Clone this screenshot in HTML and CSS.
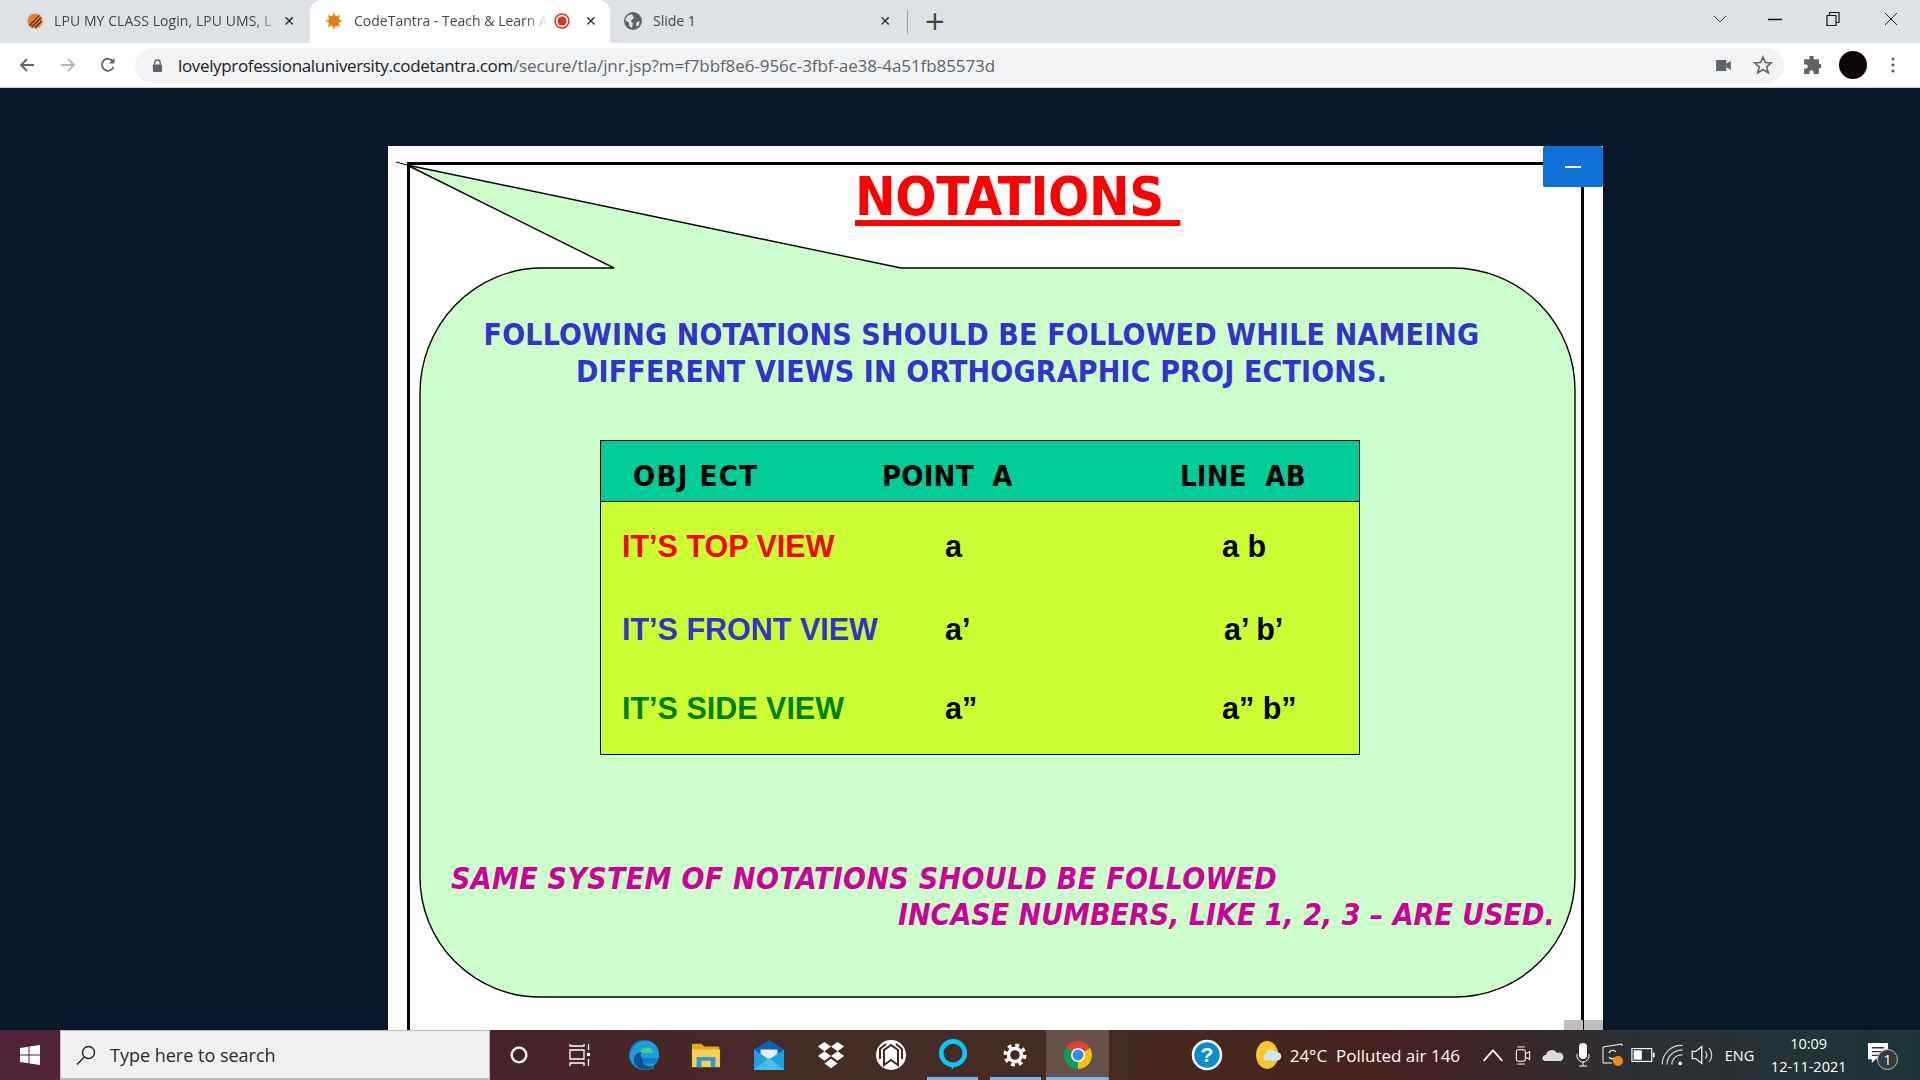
FILE: index.html
```html
<!DOCTYPE html>
<html>
<head>
  <title>CodeTantra - Teach &amp; Learn</title>
  <link rel="stylesheet" href="styles.css">
</head>
<body>
  <!-- Browser tabs -->
  <div class="tabstrip">
    <div class="tab tab-first">
      <svg class="favicon" viewBox="0 0 16 16"><circle cx="8" cy="8" r="8" fill="#d8d4cc"/><circle cx="8" cy="8" r="6.5" fill="#ee7d22"/><path d="M3 12 L12 3 M5 13.5 L13.5 5 M8 14 L14 8" stroke="#4a3328" stroke-width="1.2"/></svg>
      <span class="tab-title">LPU MY CLASS Login, LPU UMS, L</span>
      <span class="tab-close">&#10005;</span>
    </div>
    <div class="tab tab-active">
      <svg class="favicon" viewBox="0 0 20 20"><path d="M10 0 L12 5 L17 3 L15.5 8 L20 10 L15.5 12 L17 17 L12 15 L10 20 L8 15 L3 17 L4.500 12 L0 10 L4.500 8 L3 3 L8 5 Z" fill="#c9a227"/><circle cx="10" cy="10" r="6" fill="#ea7a12"/></svg>
      <span class="tab-title">CodeTantra - Teach &amp; Learn A</span>
      <svg class="rec" viewBox="0 0 16 16"><circle cx="8" cy="8" r="7" fill="none" stroke="#d93025" stroke-width="1.500"/><circle cx="8" cy="8" r="4.500" fill="#d93025"/></svg>
      <span class="tab-close">&#10005;</span>
    </div>
    <div class="tab tab-last">
      <svg class="favicon" viewBox="0 0 16 16"><circle cx="8" cy="8" r="8" fill="#5f6368"/><path d="M3 3 L7 2 L9 5 L6 8 L8 10 L7 14 L5 13 L4 9 L1 7 Z M11 9 L14 8 L13 12 L11 13 Z" fill="#dee1e6"/></svg>
      <span class="tab-title">Slide 1</span>
      <span class="tab-close">&#10005;</span>
    </div>
    <div class="tab-sep"></div>
    <span class="new-tab">+</span>
    <div class="window-controls">
      <svg viewBox="0 0 14 8" class="win-chevron"><path d="M1 1 L7 7 L13 1" fill="none" stroke="#333" stroke-width="1"/></svg>
      <svg viewBox="0 0 14 14" class="win-min"><path d="M0 7.500 H14" stroke="#111" stroke-width="1.500"/></svg>
      <svg viewBox="0 0 14 14" class="win-restore"><path d="M1 3.500 H10 V13.500 H1 Z M3.500 3.500 V0.500 H13 V10.500 H10" fill="none" stroke="#111" stroke-width="1.200"/></svg>
      <svg viewBox="0 0 14 14" class="win-close"><path d="M1 1 L13 13 M13 1 L1 13" stroke="#222" stroke-width="1"/></svg>
    </div>
  </div>

  <!-- Address bar -->
  <div class="toolbar">
    <svg class="nav-icon nav-back" viewBox="0 0 16 16"><path d="M15 8 H2 M8 2 L2 8 L8 14" fill="none" stroke="#5f6368" stroke-width="1.800"/></svg>
    <svg class="nav-icon nav-forward" viewBox="0 0 16 16"><path d="M1 8 H14 M8 2 L14 8 L8 14" fill="none" stroke="#b4b7bb" stroke-width="1.800"/></svg>
    <svg class="nav-icon nav-reload" viewBox="0 0 16 16"><path d="M13.500 10 A6 6 0 1 1 13 4.500" fill="none" stroke="#5f6368" stroke-width="1.800"/><path d="M14.500 1 V6.500 H9 Z" fill="#5f6368"/></svg>
    <div class="omnibox">
      <svg class="lock" viewBox="0 0 12 14"><path d="M3 6 V4 A3 3 0 0 1 9 4 V6" fill="none" stroke="#5f6368" stroke-width="1.400"/><rect x="1" y="6" width="10" height="8" rx="1" fill="#5f6368"/></svg>
      <span class="url"><span class="url-host">lovelyprofessionaluniversity.codetantra.com</span>/secure/tla/jnr.jsp?m=f7bbf8e6-956c-3fbf-ae38-4a51fb85573d</span>
      <svg class="omni-video" viewBox="0 0 16 12"><rect x="0" y="0" width="11" height="12" fill="#5f6368"/><path d="M11 4 L16 1 V11 L11 8 Z" fill="#5f6368"/></svg>
      <svg class="omni-star" viewBox="0 0 20 20"><path d="M10 2 L12.300 7.600 L18.300 8 L13.700 11.900 L15.200 17.800 L10 14.600 L4.800 17.800 L6.300 11.900 L1.700 8 L7.700 7.600 Z" fill="none" stroke="#5f6368" stroke-width="1.600"/></svg>
    </div>
    <svg class="puzzle" viewBox="0 0 18 18"><path d="M7 1 A2 2 0 0 1 11 1 V3 H16 V7.500 H17.500 A2 2 0 0 1 17.500 11.500 H16 V17 H11 V15.500 A2 2 0 0 0 7 15.500 V17 H2 V12 H3.500 A2 2 0 0 0 3.500 8 H2 V3 H7 Z" fill="#5f6368"/></svg>
    <div class="avatar"></div>
    <svg class="kebab" viewBox="0 0 4 16"><circle cx="2" cy="2" r="1.600" fill="#5f6368"/><circle cx="2" cy="8" r="1.600" fill="#5f6368"/><circle cx="2" cy="14" r="1.600" fill="#5f6368"/></svg>
  </div>

  <!-- Presentation area -->
  <div class="stage">
    <div class="slide">
      <div class="frame"></div>
      <svg class="bubble" viewBox="0 0 1215 883">
        <path d="M8 15 L19 18" stroke="#000" stroke-width="1"/>
        <path d="M19 18 L513 121 L1065 121 A122 122 0 0 1 1187 243 L1187 730 A120 120 0 0 1 1067 850 L152 850 A120 120 0 0 1 32 730 L32 246 A122 125 0 0 1 153 121 L226 121 Z" fill="#ccffcc" stroke="#000" stroke-width="1.400"/>
      </svg>

      <h1 class="slide-title">NOTATIONS&nbsp;</h1>
      <p class="intro">FOLLOWING NOTATIONS SHOULD BE FOLLOWED WHILE NAMEING<br>DIFFERENT VIEWS IN ORTHOGRAPHIC PROJ ECTIONS.</p>

      <div class="notation-table">
        <div class="table-head">
          <span class="head-object">OBJ ECT</span>
          <span>POINT&nbsp; A</span>
          <span>LINE&nbsp; AB</span>
        </div>
        <div class="table-body">
          <span class="view-top">IT’S TOP VIEW</span><span>a</span><span>a b</span>
          <span class="view-front">IT’S FRONT VIEW</span><span>a’</span><span class="nudge">a’ b’</span>
          <span class="view-side">IT’S SIDE VIEW</span><span>a”</span><span>a” b”</span>
        </div>
      </div>

      <p class="note note-left">SAME SYSTEM OF NOTATIONS SHOULD BE FOLLOWED</p>
      <p class="note note-right">INCASE NUMBERS, LIKE 1, 2, 3 – ARE USED.</p>

      <div class="corner-mark"></div>
      <button class="minimize"></button>
    </div>
  </div>

  <!-- Windows taskbar -->
  <div class="taskbar">
    <div class="start">
      <svg viewBox="0 0 20 20" class="start-logo"><path d="M0 3 L8.500 1.700 V9.500 H0 Z M9.500 1.500 L20 0 V9.500 H9.500 Z M0 10.500 H8.500 V18.300 L0 17 Z M9.500 10.500 H20 V20 L9.500 18.500 Z" fill="#fff"/></svg>
    </div>
    <div class="search">
      <svg viewBox="0 0 20 20" class="search-icon"><circle cx="12.500" cy="7.500" r="6" fill="none" stroke="#222" stroke-width="1.400"/><path d="M8.300 12 L1 19.500" stroke="#222" stroke-width="1.400"/></svg>
      <span>Type here to search</span>
    </div>

    <div class="app app-first"><svg viewBox="0 0 24 24" class="icon-22"><circle cx="12" cy="12" r="8" fill="none" stroke="#fff" stroke-width="2.600"/></svg></div>
    <div class="app"><svg viewBox="0 0 24 24" class="icon-24"><path d="M3 1 V3 H17 V1 M3 7 H17 V16 H3 Z M3 23 V20 H17 V23" fill="none" stroke="#fff" stroke-width="1.300"/><rect x="20" y="10" width="3" height="3" fill="#fff"/><path d="M21.500 1 V7 M21.500 16 V23" stroke="#fff" stroke-width="1.300"/></svg></div>
    <div class="app app-shift"><svg viewBox="0 0 32 32" class="icon-32"><circle cx="16" cy="16" r="15" fill="#0f7fc9"/><path d="M2 18 C2 7 12 1 20 2 C28 3 32 11 31 19 H13 C13 24 19 26 26 24 V29 C15 34 4 28 2 18 Z" fill="#1e9ed8"/><path d="M12 13 C15 7 24 7 25 14 H12 Z" fill="#3ecf8e"/><path d="M14 19 C14 27 22 29 27 26 C23 32 10 33 6 23 C5 16 10 13 14 13 C12 15 12 17 14 19 Z" fill="#12508f"/></svg></div>
    <div class="app app-shift"><svg viewBox="0 0 32 32" class="icon-30"><path d="M1 4 H11 L14 7 H30 V16 H1 Z" fill="#e2a91c"/><path d="M1 10 H31 V29 H1 Z" fill="#f7cf52"/><path d="M6 18 H26 V29 H21 V22 H11 V29 H6 Z" fill="#2b9ad8"/></svg></div>
    <div class="app app-shift"><svg viewBox="0 0 32 32" class="icon-30"><path d="M0 10 L16 0 L32 10 V32 H0 Z" fill="#0f5fb0"/><path d="M7 10 H25 V15 L16 21 L7 15 Z" fill="#e8edf0"/><path d="M0 10 L16 21 L32 10 V32 H0 Z" fill="#1e9fe6"/><path d="M0 32 L16 19 L32 32 Z" fill="#45bdf2"/></svg></div>
    <div class="app app-shift"><svg viewBox="0 0 32 30" class="icon-30"><path d="M9 1 L16 6 L9 11 L2 6 Z M23 1 L30 6 L23 11 L16 6 Z M9 11 L16 16 L9 21 L2 16 Z M23 11 L30 16 L23 21 L16 16 Z M16 19 L23 24 L16 29 L9 24 Z" fill="#fff"/></svg></div>
    <div class="app"><svg viewBox="0 0 32 32" class="icon-32"><circle cx="16" cy="16" r="15" fill="#fff"/><path d="M9 26 V11 L16 6 L23 11 V26 L16 21 Z M5 20 V10 L11 5 M27 20 V10 L21 5" fill="none" stroke="#45291f" stroke-width="2"/></svg></div>
    <div class="app app-open"><svg viewBox="0 0 32 34" class="icon-32"><circle cx="16" cy="15" r="12.500" fill="none" stroke="#00caff" stroke-width="5"/><path d="M13 25 L19 26 L15 33 Z" fill="#00caff"/></svg></div>
    <div class="app app-open"><svg viewBox="0 0 24 24" class="icon-24"><circle cx="12" cy="12" r="9.500" fill="none" stroke="#fff" stroke-width="4" stroke-dasharray="3.700 3.760"/><circle cx="12" cy="12" r="6.500" fill="none" stroke="#fff" stroke-width="3.400"/></svg></div>
    <div class="app app-open app-active"><svg viewBox="0 0 32 32" class="icon-32"><path d="M16 16 L3.900 9 A14 14 0 0 1 28.100 9 Z" fill="#db4437"/><path d="M16 16 L28.100 9 A14 14 0 0 1 16 30 Z" fill="#f4c20d"/><path d="M16 16 L16 30 A14 14 0 0 1 3.900 9 Z" fill="#0f9d58"/><circle cx="16" cy="16" r="7" fill="#fff"/><circle cx="16" cy="16" r="5.500" fill="#4285f4"/></svg></div>

    <div class="help"><svg viewBox="0 0 32 32" class="icon-32"><circle cx="16" cy="16" r="14" fill="#0b8ed0" stroke="#fff" stroke-width="2.500"/><text x="16" y="23" class="help-mark">?</text></svg></div>
    <div class="weather">
      <svg viewBox="0 0 28 32" class="weather-icon"><ellipse cx="12" cy="16" rx="12" ry="15" fill="#fbc531"/><path d="M10 22 A4 4 0 0 1 10 15 A6 6 0 0 1 21 13 A4.500 4.500 0 0 1 24 22 Z" fill="#cfe6f5"/></svg>
      <span>24°C&nbsp; Polluted air 146</span>
    </div>
    <div class="tray">
      <svg viewBox="0 0 20 12" class="tray-icon"><path d="M2 11 L10 2 L18 11" fill="none" stroke="#fff" stroke-width="1.400"/></svg>
      <svg viewBox="0 0 16 20" class="tray-icon tray-meet"><path d="M2 1 H10 M2 19 H10" stroke="#fff" stroke-width="1"/><rect x="1" y="4" width="9.500" height="12" rx="2" fill="none" stroke="#fff" stroke-width="1.100"/><path d="M11 8 L15 6 V14 L11 12" fill="none" stroke="#fff" stroke-width="1.100"/></svg>
      <svg viewBox="0 0 22 14" class="tray-icon"><path d="M3 13 A3 3 0 0 1 4 7 A6 6 0 0 1 15 5 A4 4 0 0 1 19 13 Z" fill="#d8dadb"/></svg>
      <svg viewBox="0 0 14 24" class="tray-icon tray-tall"><rect x="3" y="0" width="8" height="16" rx="4" fill="#fff"/><path d="M1 11 V13 A6 6 0 0 0 13 13 V11 M7 19 V23 M3 23 H11" fill="none" stroke="#fff" stroke-width="1"/></svg>
      <svg viewBox="0 0 22 24" class="tray-icon tray-tall"><path d="M1 4 L20 1 V3 M1 4 V20 H10" fill="none" stroke="#fff" stroke-width="1"/><path d="M7 10 A4 4 0 0 1 14 9 M13 15 A4 4 0 0 1 7 14" fill="none" stroke="#fff" stroke-width="1.200"/><circle cx="16" cy="18" r="5" fill="#f28c13"/></svg>
      <svg viewBox="0 0 20 12" class="tray-icon"><rect x="0.500" y="0.500" width="17" height="11" fill="none" stroke="#fff"/><rect x="2" y="2" width="7" height="8" fill="#fff"/><rect x="18.500" y="4" width="1.500" height="4" fill="#fff"/></svg>
      <svg viewBox="0 0 20 20" class="tray-icon tray-tall"><path d="M1 18 A16 16 0 0 1 18 2 M5 18 A12 12 0 0 1 18 6 M9 18 A8 8 0 0 1 18 10" fill="none" stroke="#d8dadb" stroke-width="1"/><circle cx="16" cy="17" r="1.500" fill="#fff"/></svg>
      <svg viewBox="0 0 20 20" class="tray-icon tray-tall"><path d="M1 7 H4 L9 3 V17 L4 13 H1 Z" fill="none" stroke="#fff" stroke-width="1"/><path d="M12 7 A5 5 0 0 1 12 13 M15 4 A9 9 0 0 1 15 16" fill="none" stroke="#d8dadb" stroke-width="1"/></svg>
    </div>
    <span class="lang">ENG</span>
    <div class="clock"><span>10:09</span><span>12-11-2021</span></div>
    <div class="notify">
      <svg viewBox="0 0 22 22" class="notify-icon"><path d="M0 0 H21 V17 H8 L4 21 V17 H0 Z" fill="#fff"/><path d="M4 5 H17 M4 9 H17 M4 13 H17" stroke="#2a3335" stroke-width="1.400"/></svg>
      <span class="notify-badge">1</span>
    </div>
  </div>
</body>
</html>
```

FILE: styles.css
```css
/* Page reset */
* {
  box-sizing: border-box;
}

body {
  margin: 0;
  width: 1920px;
  height: 1080px;
  overflow: hidden;
  font-family: "Open Sans", "Noto Sans", sans-serif;
  background: #06182a;
}

/* Tab strip */
.tabstrip {
  display: flex;
  align-items: center;
  height: 43px;
  background: #dee1e6;
}

.tab {
  display: flex;
  align-items: center;
  height: 43px;
  font-size: 14px;
  color: #45484c;
}

.tab-first {
  width: 310px;
  padding: 0 14px 2px 26px;
}

.tab-active {
  width: 300px;
  padding: 0 14px 2px 15px;
  background: #fff;
  border-radius: 12px 12px 0 0;
}

.tab-last {
  width: 295px;
  padding: 0 13px 2px 14px;
}

.favicon {
  width: 18px;
  height: 18px;
  flex: none;
}

.tab-title {
  flex: 1;
  margin-left: 11px;
  white-space: nowrap;
  -webkit-mask-image: linear-gradient(to right, #000 88%, transparent 100%);
  mask-image: linear-gradient(to right, #000 88%, transparent 100%);
}

.tab-first .tab-title {
  margin-left: 10px;
  letter-spacing: 0.08px;
}

.tab-last .tab-title {
  -webkit-mask-image: none;
  mask-image: none;
}

.tab-close {
  flex: none;
  width: 14px;
  font-size: 14px;
  font-weight: 700;
  color: #2b2d30;
  text-align: center;
  font-family: "DejaVu Sans", sans-serif;
}

.rec {
  width: 16px;
  height: 16px;
  margin: 0 14px 0 6px;
  flex: none;
}

.tab-sep {
  width: 1px;
  height: 24px;
  margin: 0 0 0 2px;
  background: #9a9da1;
}

.new-tab {
  margin: 0 0 2px 16px;
  font-size: 26px;
  font-weight: 400;
  line-height: 26px;
  color: #3c4043;
  font-family: "DejaVu Sans", sans-serif;
}

.window-controls {
  display: flex;
  align-items: center;
  margin-left: auto;
  padding: 0 22px 6px 0;
}

.win-chevron {
  width: 14px;
  height: 8px;
}

.win-min {
  width: 14px;
  height: 14px;
  margin-left: 41px;
}

.win-restore {
  width: 14px;
  height: 14px;
  margin-left: 44px;
}

.win-close {
  width: 14px;
  height: 14px;
  margin-left: 44px;
}

/* Toolbar with address bar */
.toolbar {
  display: flex;
  align-items: center;
  height: 45px;
  background: #fff;
  border-bottom: 1px solid #d0d2d5;
}

.nav-icon {
  width: 16px;
  height: 16px;
  flex: none;
}

.nav-back {
  margin-left: 19px;
}

.nav-forward {
  margin-left: 25px;
}

.nav-reload {
  margin-left: 24px;
}

.omnibox {
  display: flex;
  align-items: center;
  width: 1649px;
  height: 35px;
  margin-left: 19px;
  padding: 0 0 0 17px;
  background: #f1f3f4;
  border-radius: 18px;
}

.lock {
  width: 11px;
  height: 13px;
  flex: none;
}

.url {
  margin-left: 15px;
  font-size: 17px;
  letter-spacing: -0.08px;
  color: #5f6368;
  white-space: nowrap;
}

.url-host {
  letter-spacing: -0.35px;
  color: #202124;
}

.omni-video {
  width: 15px;
  height: 11px;
  margin-left: auto;
}

.omni-star {
  width: 20px;
  height: 20px;
  margin: 0 11px 0 22px;
}

.puzzle {
  width: 19px;
  height: 19px;
  margin-left: 18px;
  flex: none;
}

.avatar {
  width: 28px;
  height: 28px;
  margin-left: 18px;
  border-radius: 50%;
  background: #0a0205;
  flex: none;
}

.kebab {
  width: 4px;
  height: 16px;
  margin-left: 24px;
  flex: none;
}

/* Dark stage holding the slide */
.stage {
  height: 942px;
  overflow: hidden;
  background: #06182a;
}

.slide {
  position: relative;
  width: 1215px;
  height: 884px;
  margin: 58px 0 0 388px;
  padding-top: 21px;
  background: #fff;
  overflow: hidden;
}

.frame {
  position: absolute;
  top: 16px;
  left: 19px;
  width: 1177px;
  height: 900px;
  border: 3px solid #000;
}

.bubble {
  position: absolute;
  top: 1px;
  left: 0;
  width: 1215px;
  height: 883px;
}

.slide-title,
.intro,
.notation-table,
.note {
  position: relative;
}

/* Slide text */
.slide-title {
  height: 60px;
  margin: 0 0 0 467px;
  font-family: "DejaVu Sans Condensed", "DejaVu Sans", sans-serif;
  font-size: 54px;
  line-height: 60px;
  font-weight: 700;
  letter-spacing: -0.4px;
  color: #f00;
  text-decoration: underline;
  text-decoration-thickness: 6px;
  text-underline-offset: 5px;
  text-decoration-skip-ink: none;
}

.intro {
  margin: 89px 0 0;
  padding-right: 28px;
  font-family: "DejaVu Sans Condensed", "DejaVu Sans", sans-serif;
  font-size: 30px;
  line-height: 37px;
  font-weight: 700;
  letter-spacing: 0.16px;
  text-align: center;
  color: #3333cc;
}

/* Notation table */
.notation-table {
  width: 760px;
  height: 315px;
  margin: 50px 0 0 212px;
  background: #ccff33;
  border: 1px solid #000;
}

.table-head {
  display: grid;
  grid-template-columns: 249px 298px 1fr;
  height: 61px;
  padding: 17px 0 0 32px;
  background: #00cc99;
  border-bottom: 1px solid #000;
  font-family: "DejaVu Sans Condensed", "DejaVu Sans", sans-serif;
  font-size: 29px;
  line-height: 36px;
  font-weight: 700;
  letter-spacing: 0.2px;
  color: #000;
}

.head-object {
  letter-spacing: 1.4px;
}

.table-body {
  display: grid;
  grid-template-columns: 323px 277px 1fr;
  grid-template-rows: 83px 79px auto;
  padding: 26px 0 0 21px;
  font-family: "Liberation Sans", Arial, sans-serif;
  font-size: 30.5px;
  line-height: 36px;
  font-weight: 700;
  color: #000;
}

.view-top {
  color: #f00;
}

.view-front {
  color: #3333cc;
}

.view-side {
  color: #008000;
}

.nudge {
  margin-left: 2px;
}

/* Note under the table */
.note {
  font-family: "DejaVu Sans Condensed", "DejaVu Sans", sans-serif;
  font-size: 30px;
  line-height: 36px;
  font-weight: 700;
  font-style: italic;
  color: #cc0099;
  white-space: nowrap;
}

.note-left {
  margin: 106px 0 0 63px;
  letter-spacing: 0.32px;
}

.note-right {
  margin: 0 0 0 510px;
}

.corner-mark {
  position: absolute;
  right: 0;
  bottom: 0;
  width: 39px;
  height: 10px;
  background: linear-gradient(to right, #bdbdbd 48%, #000 48%, #000 52%, #bdbdbd 52%);
}

.minimize {
  position: absolute;
  top: 0;
  right: 0;
  width: 60px;
  height: 41px;
  padding: 0;
  background: #0f70d7;
  border: none;
  border-radius: 2px;
}

.minimize::after {
  content: "";
  display: block;
  width: 16px;
  height: 2px;
  margin: 0 auto;
  background: #fff;
}

/* Taskbar */
.taskbar {
  display: flex;
  align-items: center;
  height: 50px;
  color: #fff;
  background: linear-gradient(to right, #50243a 0, #47222a 25%, #452c24 45%, #45291f 62%, #48201f 72%, #2c2f32 85%, #1d3539 100%);
}

.start {
  display: flex;
  align-items: center;
  justify-content: center;
  width: 60px;
  height: 50px;
}

.start-logo {
  width: 20px;
  height: 20px;
}

.search {
  display: flex;
  align-items: center;
  width: 430px;
  height: 50px;
  padding-left: 15px;
  background: #f0f0f0;
  border: 1px solid #bcbcbc;
  border-bottom-width: 2px;
  font-size: 18px;
  color: #2a2a2a;
}

.search-icon {
  width: 20px;
  height: 20px;
  margin-right: 14px;
}

.app {
  display: flex;
  align-items: center;
  justify-content: center;
  width: 62.3px;
  height: 50px;
}

.app-first {
  width: 58px;
}

.app-shift svg {
  margin-left: 5px;
}

.app-open {
  background: linear-gradient(#76b9ed, #76b9ed) center bottom / 51px 3px no-repeat;
}

.app-active {
  background: linear-gradient(#76b9ed, #76b9ed) center bottom / 100% 3px no-repeat, #675248;
}

.icon-22 {
  width: 22px;
  height: 22px;
}

.icon-24 {
  width: 24px;
  height: 24px;
}

.icon-30 {
  width: 30px;
  height: 30px;
}

.icon-32 {
  width: 32px;
  height: 32px;
}

.help {
  display: flex;
  align-items: center;
  justify-content: center;
  width: 32px;
  margin-left: 82px;
}

.help-mark {
  font-family: "Liberation Sans", Arial, sans-serif;
  font-size: 21px;
  font-weight: 700;
  fill: #fff;
  text-anchor: middle;
}

.weather {
  display: flex;
  align-items: center;
  margin-left: 33px;
  font-size: 17px;
  white-space: nowrap;
}

.weather-icon {
  width: 26px;
  height: 30px;
  margin-right: 8px;
}

.tray {
  display: flex;
  margin-left: 17.6px;
}

.tray-icon {
  width: 30px;
  height: 14px;
  align-self: center;
}

.tray-meet {
  height: 19px;
}

.tray-tall {
  height: 24px;
}

.lang {
  width: 32px;
  margin-left: 7px;
  font-size: 14.5px;
}

.clock {
  display: flex;
  flex-direction: column;
  align-items: center;
  width: 90px;
  margin-left: 7px;
  font-size: 14.5px;
  line-height: 23px;
}

.notify {
  position: relative;
  width: 36px;
  height: 34px;
  margin-left: 9.4px;
}

.notify-icon {
  position: absolute;
  top: 5px;
  left: 5px;
  width: 21px;
  height: 21px;
}

.notify-badge {
  position: absolute;
  top: 11px;
  left: 14px;
  width: 21px;
  height: 21px;
  border: 1px solid #bbb;
  border-radius: 50%;
  background: #333b3d;
  font-size: 14px;
  line-height: 19px;
  text-align: center;
}
```
